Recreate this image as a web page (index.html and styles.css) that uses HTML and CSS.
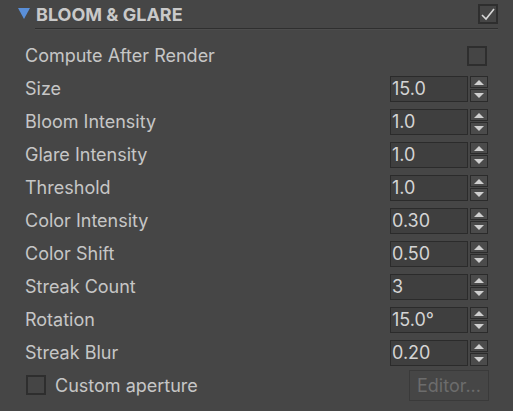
FILE: index.html
```html
<!DOCTYPE html>
<html>
<head>
<meta charset="utf-8">
<link rel="stylesheet" href="styles.css">
</head>
<body>
<div class="panel">
  <div class="header">
    <span class="foldout"></span>
    <div class="title-wrap">
      <span class="title">BLOOM &amp; GLARE</span>
      <span class="check big checked">
        <svg width="16" height="14" viewBox="0 0 16 14"><path d="M2 8 L6 12 L14 2" fill="none" stroke="#d8d8d8" stroke-width="1.6"/></svg>
      </span>
    </div>
  </div>
  <div class="rows">
    <div class="row"><span class="label">Compute After Render</span><span class="check"></span></div>
    <div class="row"><span class="label">Size</span><div class="spin"><span class="field">15.0</span><span class="btns"><span class="up"></span><span class="down"></span></span></div></div>
    <div class="row"><span class="label">Bloom Intensity</span><div class="spin"><span class="field">1.0</span><span class="btns"><span class="up"></span><span class="down"></span></span></div></div>
    <div class="row"><span class="label">Glare Intensity</span><div class="spin"><span class="field">1.0</span><span class="btns"><span class="up"></span><span class="down"></span></span></div></div>
    <div class="row"><span class="label">Threshold</span><div class="spin"><span class="field">1.0</span><span class="btns"><span class="up"></span><span class="down"></span></span></div></div>
    <div class="row"><span class="label">Color Intensity</span><div class="spin"><span class="field">0.30</span><span class="btns"><span class="up"></span><span class="down"></span></span></div></div>
    <div class="row"><span class="label">Color Shift</span><div class="spin"><span class="field">0.50</span><span class="btns"><span class="up"></span><span class="down"></span></span></div></div>
    <div class="row"><span class="label">Streak Count</span><div class="spin"><span class="field">3</span><span class="btns"><span class="up"></span><span class="down"></span></span></div></div>
    <div class="row"><span class="label">Rotation</span><div class="spin"><span class="field">15.0°</span><span class="btns"><span class="up"></span><span class="down"></span></span></div></div>
    <div class="row"><span class="label">Streak Blur</span><div class="spin"><span class="field">0.20</span><span class="btns"><span class="up"></span><span class="down"></span></span></div></div>
    <div class="row last">
      <div class="cb-label"><span class="check"></span><span class="label">Custom aperture</span></div>
      <span class="button">Editor...</span>
    </div>
  </div>
</div>
</body>
</html>
```

FILE: styles.css
```css
html, body {
  margin: 0;
  padding: 0;
  background: #464646;
}
.panel {
  width: 513px;
  height: 411px;
  font-family: Inter, "Noto Sans", sans-serif;
  font-size: 18px;
  color: #c8c8c8;
}
.header {
  display: flex;
  height: 39px;
}
.foldout {
  width: 0;
  height: 0;
  margin: 8px 5px 0 18px;
  border-left: 6px solid transparent;
  border-right: 6px solid transparent;
  border-top: 11px solid #5a8fd8;
}
.title-wrap {
  flex: 1;
  margin-right: 15px;
  height: 28px;
  border-bottom: 1px solid #2f2f2f;
  box-shadow: 0 1px 0 #4d4d4d;
  display: flex;
  justify-content: space-between;
  align-items: flex-start;
}
.title {
  font-weight: 700;
  font-size: 18px;
  color: #c9c9c9;
  line-height: 22px;
  margin-top: 4px;
  padding-left: 1px;
}
.check {
  box-sizing: border-box;
  width: 20px;
  height: 20px;
  border: 2px solid #2e2e2e;
  background: #454545;
  display: flex;
  align-items: center;
  justify-content: center;
}
.check.big {
  margin-top: 4px;
}
.rows {
  padding: 0 25px;
}
.row {
  height: 33px;
  display: flex;
  align-items: center;
  justify-content: space-between;
}
.label {
  color: #c6c6c6;
}
.row > .check {
  margin-right: 1px;
}
.spin {
  display: flex;
  gap: 2px;
  height: 26px;
}
.field {
  box-sizing: border-box;
  width: 78px;
  height: 26px;
  border: 1px solid #2b2b2b;
  background: #3f3f3f;
  color: #d4d4d4;
  line-height: 24px;
  padding-left: 1px;
}
.btns {
  display: flex;
  flex-direction: column;
  gap: 1px;
  width: 18px;
}
.btns span {
  box-sizing: border-box;
  flex: 1;
  border: 1px solid #2b2b2b;
  background: #4b4b4b;
  position: relative;
}
.btns span::after {
  content: "";
  position: absolute;
  left: 3px;
  width: 0;
  height: 0;
  border-left: 5px solid transparent;
  border-right: 5px solid transparent;
}
.btns .up::after {
  top: 3px;
  border-bottom: 5px solid #cfcfcf;
}
.btns .down::after {
  top: 3px;
  border-top: 5px solid #cfcfcf;
}
.cb-label {
  display: flex;
  align-items: center;
  gap: 9px;
}
.row.last .check {
  width: 20px;
  height: 20px;
  margin-left: 1px;
  margin-top: -1px;
}
.button {
  box-sizing: border-box;
  width: 80px;
  height: 31px;
  border: 1px solid #3a3a3a;
  background: #464646;
  color: #6c6c6c;
  display: flex;
  align-items: center;
  justify-content: center;
  margin-right: -1px;
}
```
